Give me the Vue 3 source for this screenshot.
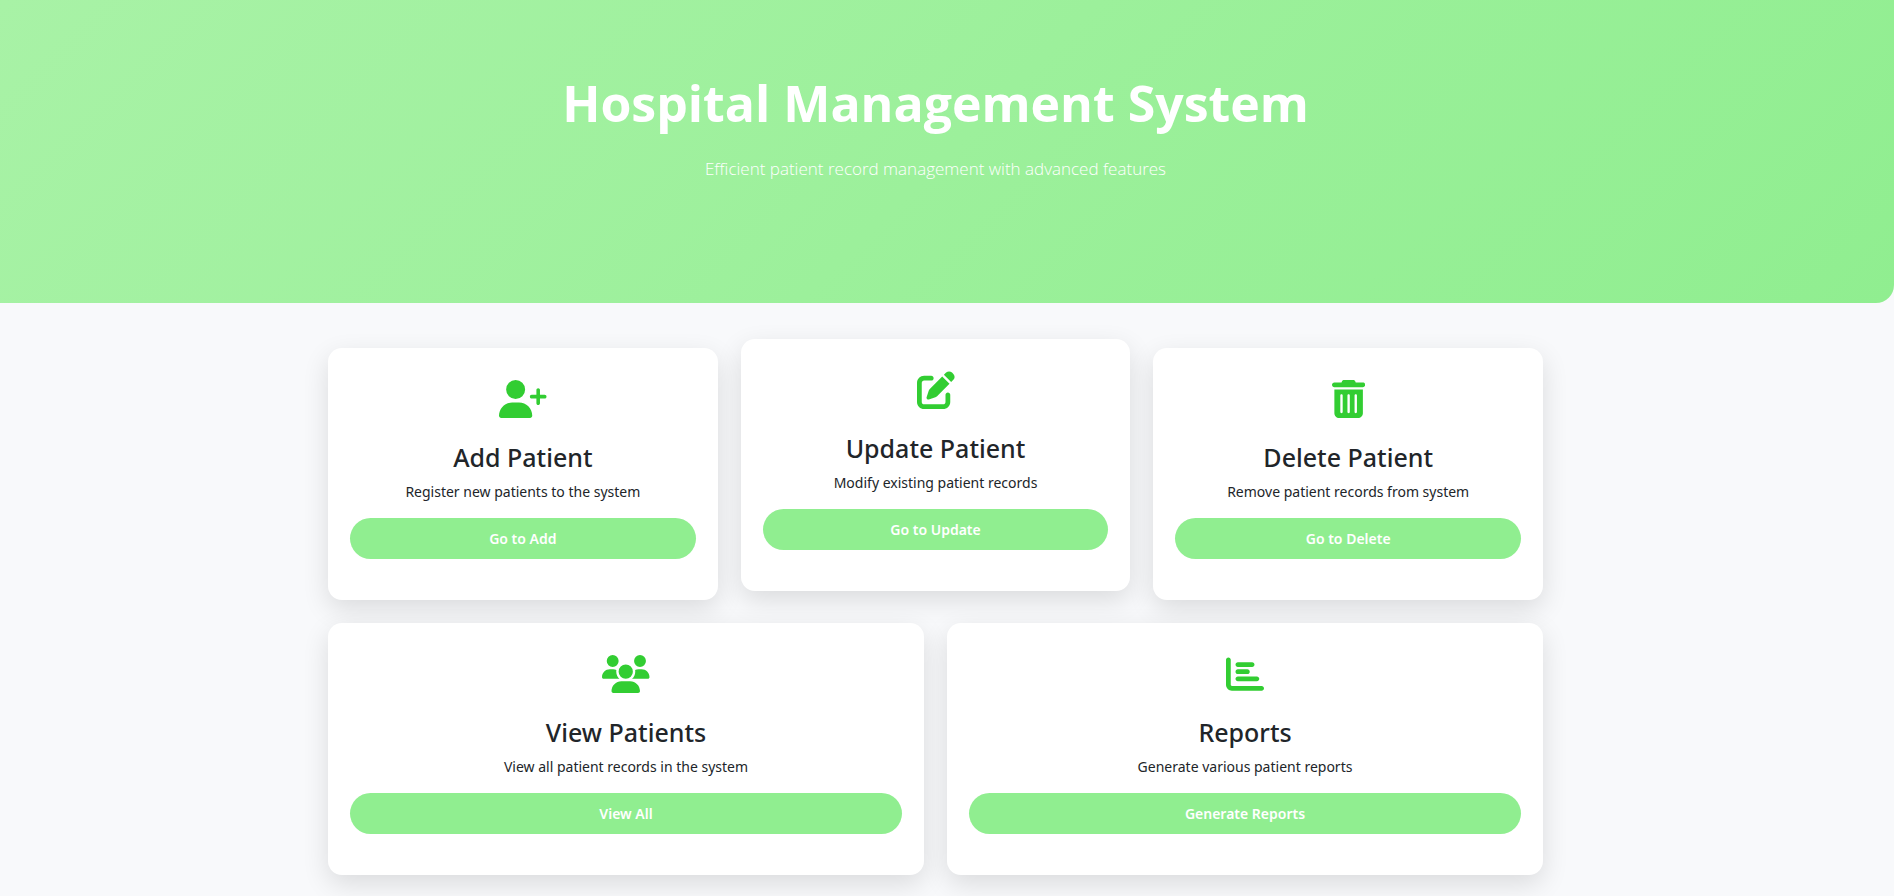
<script setup>
const rows = [
  {
    name: 'records',
    cards: [
      {
        title: 'Add Patient',
        text: 'Register new patients to the system',
        action: 'Go to Add',
        href: '#add',
        viewBox: '0 0 640 512',
        path: 'M96 128a128 128 0 1 1 256 0A128 128 0 1 1 96 128zM0 482.3C0 383.8 79.8 304 178.3 304l91.4 0C368.2 304 448 383.8 448 482.3c0 16.4-13.3 29.7-29.7 29.7L29.7 512C13.3 512 0 498.7 0 482.3zM504 312l0-64-64 0c-13.3 0-24-10.7-24-24s10.7-24 24-24l64 0 0-64c0-13.3 10.7-24 24-24s24 10.7 24 24l0 64 64 0c13.3 0 24 10.7 24 24s-10.7 24-24 24l-64 0 0 64c0 13.3-10.7 24-24 24s-24-10.7-24-24z',
      },
      {
        title: 'Update Patient',
        text: 'Modify existing patient records',
        action: 'Go to Update',
        href: '#update',
        raised: true,
        viewBox: '0 0 512 512',
        path: 'M471.6 21.7c-21.9-21.9-57.3-21.9-79.2 0L362.3 51.7l97.9 97.9 30.1-30.1c21.9-21.9 21.9-57.3 0-79.2L471.6 21.7zm-299.2 220c-6.1 6.1-10.8 13.6-13.5 21.9l-29.6 88.8c-2.9 8.6-.6 18.1 5.8 24.6s15.9 8.7 24.6 5.8l88.8-29.6c8.2-2.7 15.7-7.4 21.9-13.5L437.7 172.3 339.7 74.3 172.4 241.7zM96 64C43 64 0 107 0 160L0 416c0 53 43 96 96 96l256 0c53 0 96-43 96-96l0-96c0-17.7-14.3-32-32-32s-32 14.3-32 32l0 96c0 17.7-14.3 32-32 32L96 448c-17.7 0-32-14.3-32-32l0-256c0-17.7 14.3-32 32-32l96 0c17.7 0 32-14.3 32-32s-14.3-32-32-32L96 64z',
      },
      {
        title: 'Delete Patient',
        text: 'Remove patient records from system',
        action: 'Go to Delete',
        href: '#delete',
        viewBox: '0 0 448 512',
        path: 'M135.2 17.7C140.6 6.8 151.7 0 163.8 0L284.2 0c12.1 0 23.2 6.8 28.6 17.7L320 32l96 0c17.7 0 32 14.3 32 32s-14.3 32-32 32L32 96C14.3 96 0 81.7 0 64S14.3 32 32 32l96 0 7.2-14.3zM32 128l384 0 0 320c0 35.3-28.7 64-64 64L96 512c-35.3 0-64-28.7-64-64l0-320zm96 64c-8.8 0-16 7.2-16 16l0 224c0 8.8 7.2 16 16 16s16-7.2 16-16l0-224c0-8.8-7.2-16-16-16zm96 0c-8.8 0-16 7.2-16 16l0 224c0 8.8 7.2 16 16 16s16-7.2 16-16l0-224c0-8.8-7.2-16-16-16zm96 0c-8.8 0-16 7.2-16 16l0 224c0 8.8 7.2 16 16 16s16-7.2 16-16l0-224c0-8.8-7.2-16-16-16z',
      },
    ],
  },
  {
    name: 'overview',
    cards: [
      {
        title: 'View Patients',
        text: 'View all patient records in the system',
        action: 'View All',
        href: '#patients',
        viewBox: '0 0 640 512',
        path: 'M144 0a80 80 0 1 1 0 160A80 80 0 1 1 144 0zM512 0a80 80 0 1 1 0 160A80 80 0 1 1 512 0zM0 298.7C0 239.8 47.8 192 106.7 192l42.7 0c15.9 0 31 3.5 44.6 9.7c-1.3 7.2-1.9 14.7-1.9 22.3c0 38.2 16.8 72.5 43.3 96c-.2 0-.4 0-.7 0L21.3 320C9.6 320 0 310.4 0 298.7zM405.3 320c-.2 0-.4 0-.7 0c26.6-23.5 43.3-57.8 43.3-96c0-7.6-.7-15-1.9-22.3c13.6-6.3 28.7-9.7 44.6-9.7l42.7 0C592.2 192 640 239.8 640 298.7c0 11.8-9.6 21.3-21.3 21.3l-213.3 0zM224 224a96 96 0 1 1 192 0 96 96 0 1 1 -192 0zM128 485.3C128 411.7 187.7 352 261.3 352l117.3 0C452.3 352 512 411.7 512 485.3c0 14.7-11.9 26.7-26.7 26.7l-330.7 0c-14.7 0-26.7-11.9-26.7-26.7z',
      },
      {
        title: 'Reports',
        text: 'Generate various patient reports',
        action: 'Generate Reports',
        href: '#reports',
        viewBox: '0 0 512 512',
        path: 'M32 32c17.7 0 32 14.3 32 32l0 336c0 8.8 7.2 16 16 16l400 0c17.7 0 32 14.3 32 32s-14.3 32-32 32L80 480c-44.2 0-80-35.8-80-80L0 64C0 46.3 14.3 32 32 32zm96 96c0-17.7 14.3-32 32-32l192 0c17.7 0 32 14.3 32 32s-14.3 32-32 32l-192 0c-17.7 0-32-14.3-32-32zm32 64l128 0c17.7 0 32 14.3 32 32s-14.3 32-32 32l-128 0c-17.7 0-32-14.3-32-32s14.3-32 32-32zm0 96l256 0c17.7 0 32 14.3 32 32s-14.3 32-32 32l-256 0c-17.7 0-32-14.3-32-32s14.3-32 32-32z',
      },
    ],
  },
]
</script>

<template>
  <div class="page">
    <header class="hero">
      <h1>Hospital Management System</h1>
      <p>Efficient patient record management with advanced features</p>
    </header>
    <main class="content">
      <div v-for="row in rows" :key="row.name" class="row">
        <section
          v-for="card in row.cards"
          :key="card.title"
          class="card"
          :class="{ raised: card.raised }"
        >
          <svg class="icon" :viewBox="card.viewBox" aria-hidden="true">
            <path :d="card.path" />
          </svg>
          <h2>{{ card.title }}</h2>
          <p>{{ card.text }}</p>
          <a class="action" :href="card.href">{{ card.action }}</a>
        </section>
      </div>
    </main>
  </div>
</template>

<style>
body {
  margin: 0;
  background: #f8f9fb;
}
</style>

<style scoped>
.page {
  min-height: 100vh;
  font-family: "Segoe UI", "Noto Sans", "Open Sans", sans-serif;
  font-size: 14px;
  line-height: 22px;
  color: #212529;
}

.hero {
  box-sizing: border-box;
  padding: 72px 23px 122px 0;
  border-bottom-right-radius: 18px;
  background: linear-gradient(135deg, #a8f2a6, #90ee90);
  color: #fff;
  text-align: center;
}

.hero h1 {
  margin: 0 0 23px;
  font-family: "Segoe UI", "Open Sans", sans-serif;
  font-size: 50px;
  line-height: 62px;
  font-weight: 700;
}

.hero p {
  margin: 0;
  font-family: "Segoe UI", "Open Sans", sans-serif;
  font-size: 17px;
  line-height: 24px;
  font-weight: 300;
}

.content {
  display: flex;
  flex-direction: column;
  gap: 23px;
  box-sizing: border-box;
  max-width: 1238px;
  margin: 0 auto;
  padding: 45px 23px 0 0;
}

.row {
  display: flex;
  gap: 23px;
}

.card {
  flex: 1 1 0;
  display: flex;
  flex-direction: column;
  align-items: center;
  padding: 32px 22px 41px;
  border-radius: 14px;
  background: #fff;
  box-shadow: 0 9px 27px rgba(0, 0, 0, 0.12);
  text-align: center;
}

.raised {
  transform: translateY(-9px);
}

.icon {
  height: 38px;
  fill: #32cd32;
}

.card h2 {
  margin: 24px 0 9px;
  font-size: 25px;
  line-height: 30px;
  font-weight: 500;
}

.card p {
  margin: 0 0 15px;
}

.action {
  align-self: stretch;
  padding: 10px 22px 9px;
  border-radius: 22px;
  background: #90ee90;
  color: #fff;
  font-weight: 600;
  text-decoration: none;
}
</style>
